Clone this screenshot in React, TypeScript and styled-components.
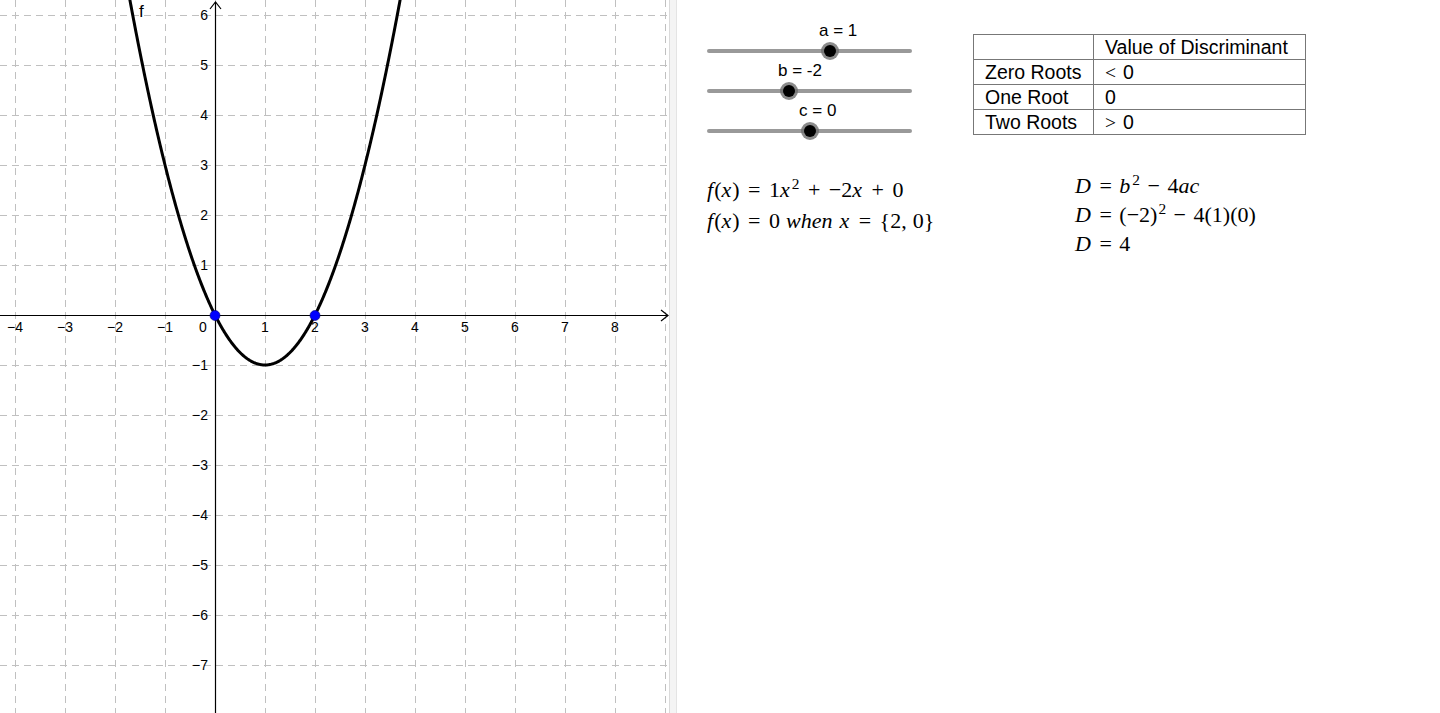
import React from "react";
import styled, { createGlobalStyle } from "styled-components";

const Global = createGlobalStyle`
  html, body { margin: 0; padding: 0; background: #fff; overflow: hidden; }
  #root { width: 1440px; height: 713px; }
`;

const Page = styled.div`
  display: flex;
  width: 1440px;
  height: 713px;
  background: #fff;
`;

const GraphPanel = styled.div`
  width: 669px;
  height: 713px;
  flex: none;
  overflow: hidden;
`;

const Divider = styled.div`
  width: 6px;
  flex: none;
  background: #f4f4f4;
  border-left: 1px solid #dadada;
  border-right: 1px solid #e4e4e4;
`;

const RightPanel = styled.div`
  flex: 1;
  display: flex;
  flex-direction: column;
  padding: 21px 0 0 30px;
`;

const TopRow = styled.div`
  display: flex;
  align-items: flex-start;
`;

const Sliders = styled.div`
  width: 205px;
  display: flex;
  flex-direction: column;
`;

const SliderItem = styled.div`
  height: 40px;
  display: flex;
  flex-direction: column;
`;

const SliderLabel = styled.div<{ $offset: number }>`
  height: 20px;
  line-height: 20px;
  margin-left: ${(p) => p.$offset}px;
  font-family: "Liberation Sans", Arial, sans-serif;
  font-size: 17px;
  color: #000;
  white-space: nowrap;
`;

const TrackZone = styled.div`
  position: relative;
  height: 20px;
  display: flex;
  align-items: center;
`;

const Track = styled.div`
  width: 100%;
  height: 4px;
  border-radius: 2px;
  background: #999999;
`;

const Knob = styled.div`
  position: absolute;
  top: 1px;
  width: 18px;
  height: 18px;
  margin-left: -9px;
  border-radius: 50%;
  background: rgba(110, 110, 110, 0.8);
  display: flex;
  align-items: center;
  justify-content: center;
  &::after {
    content: "";
    width: 12px;
    height: 12px;
    border-radius: 50%;
    background: #000;
  }
`;

const Table = styled.table`
  margin-left: 61px;
  margin-top: 13px;
  border-collapse: collapse;
  font-family: "Liberation Sans", Arial, sans-serif;
  font-size: 19.5px;
  color: #000;
`;

const Cell = styled.td<{ $w?: number }>`
  border: 1px solid #777;
  height: 24px;
  padding: 0 0 0 11px;
  line-height: 22px;
  white-space: nowrap;
  ${(p) => (p.$w ? `width: ${p.$w}px;` : "")}
`;

const Rel = styled.span`
  font-family: "Liberation Serif", "DejaVu Serif", serif;
  margin-right: 7px;
`;

const BottomRow = styled.div`
  display: grid;
  grid-template-columns: 368px auto;
  margin-top: 30px;
`;

const MathBlock = styled.div<{ $pad: number; $lh: number; $gap: number }>`
  padding-top: ${(p) => p.$pad}px;
  font-family: "Liberation Serif", "DejaVu Serif", serif;
  font-size: 22px;
  color: #000;
  line-height: ${(p) => p.$lh}px;
  --op-gap: ${(p) => p.$gap}px;
`;

const MathLine = styled.div`
  white-space: nowrap;
`;

const V = styled.i`
  font-style: italic;
  margin-right: 1px;
`;

const Op = styled.span`
  margin: 0 var(--op-gap);
`;

const Sup = styled.sup`
  font-size: 0.7em;
  vertical-align: 0;
  position: relative;
  top: -0.5em;
  line-height: 0;
  margin-left: 1px;
`;

const Sp = styled.span`
  display: inline-block;
  width: 6px;
`;

/* ---------- Graph ---------- */

const OX = 215;
const OY = 315;
const U = 50;

function Graph() {
  const grid: number[] = [];
  for (let p = 15; p <= 665; p += 50) grid.push(p);

  const pts: string[] = [];
  for (let x = -1.9; x <= 3.9; x += 0.01) {
    const y = x * x - 2 * x;
    pts.push(`${(OX + U * x).toFixed(2)},${(OY - U * y).toFixed(2)}`);
  }

  const xl: number[] = [];
  for (let k = -4; k <= 8; k++) if (k !== 0) xl.push(k);
  const yl: number[] = [];
  for (let k = 6; k >= -7; k--) if (k !== 0) yl.push(k);
  const fmt = (k: number) => (k < 0 ? `\u2212${-k}` : `${k}`);

  return (
    <svg width="669" height="713" viewBox="0 0 669 713">
      <g stroke="#c0c0c0" strokeWidth="1" strokeDasharray="7,5">
        {grid.map((p) => (
          <line key={"v" + p} x1={p + 0.5} y1={0} x2={p + 0.5} y2={713} />
        ))}
        {grid.map((p) => (
          <line key={"h" + p} x1={0} y1={p + 0.5} x2={669} y2={p + 0.5} />
        ))}
      </g>
      <g stroke="#000" strokeWidth="1.2" fill="none">
        <line x1={0} y1={OY + 0.5} x2={668} y2={OY + 0.5} />
        <polyline points={`661,${OY - 5} 668,${OY + 0.5} 661,${OY + 6}`} />
        <line x1={OX + 0.5} y1={2} x2={OX + 0.5} y2={713} />
        <polyline points={`${OX - 5},9 ${OX + 0.5},2 ${OX + 6},9`} />
      </g>
      <g fontFamily="'Liberation Sans', Arial, sans-serif" fontSize="14" fill="#000">
        {xl.map((k) => (
          <text key={"x" + k} x={OX + U * k} y={332} textAnchor="middle">
            {fmt(k)}
          </text>
        ))}
        <text x={203} y={332} textAnchor="middle">0</text>
        {yl.map((k) => (
          <text key={"y" + k} x={208} y={OY - U * k + 5} textAnchor="end">
            {fmt(k)}
          </text>
        ))}
      </g>
      <polyline points={pts.join(" ")} fill="none" stroke="#000" strokeWidth="3" strokeLinejoin="round" />
      <text x={139} y={17} fontFamily="'Liberation Sans', Arial, sans-serif" fontSize="17" fill="#000">
        f
      </text>
      <circle cx={OX} cy={OY + 0.5} r={5} fill="#0000ff" stroke="#00007a" strokeWidth="0.6" />
      <circle cx={OX + 2 * U} cy={OY + 0.5} r={5} fill="#0000ff" stroke="#00007a" strokeWidth="0.6" />
    </svg>
  );
}

/* ---------- Sliders ---------- */

const TRACK_W = 205;
type SliderDef = { name: string; value: number; min: number; max: number };
const sliders: SliderDef[] = [
  { name: "a", value: 1, min: -5, max: 5 },
  { name: "b", value: -2, min: -10, max: 10 },
  { name: "c", value: 0, min: -5, max: 5 },
];

function Slider({ s }: { s: SliderDef }) {
  const frac = (s.value - s.min) / (s.max - s.min);
  const pos = frac * TRACK_W;
  return (
    <SliderItem>
      <SliderLabel $offset={Math.round(pos - 11)}>
        {s.name} = {s.value}
      </SliderLabel>
      <TrackZone>
        <Track />
        <Knob style={{ left: pos }} />
      </TrackZone>
    </SliderItem>
  );
}

export default function App() {
  return (
    <>
      <Global />
      <Page>
        <GraphPanel>
          <Graph />
        </GraphPanel>
        <Divider />
        <RightPanel>
          <TopRow>
            <Sliders>
              {sliders.map((s) => (
                <Slider key={s.name} s={s} />
              ))}
            </Sliders>
            <Table>
              <tbody>
                <tr>
                  <Cell $w={108}></Cell>
                  <Cell $w={200}>Value of Discriminant</Cell>
                </tr>
                <tr>
                  <Cell>Zero Roots</Cell>
                  <Cell>
                    <Rel>&lt;</Rel>0
                  </Cell>
                </tr>
                <tr>
                  <Cell>One Root</Cell>
                  <Cell>0</Cell>
                </tr>
                <tr>
                  <Cell>Two Roots</Cell>
                  <Cell>
                    <Rel>&gt;</Rel>0
                  </Cell>
                </tr>
              </tbody>
            </Table>
          </TopRow>
          <BottomRow>
            <MathBlock $pad={3} $lh={31} $gap={8.5}>
              <MathLine>
                <V>f</V>(<V>x</V>)<Op>=</Op>1<V>x</V>
                <Sup>2</Sup>
                <Op>+</Op>−2<V>x</V>
                <Op>+</Op>0
              </MathLine>
              <MathLine>
                <V>f</V>(<V>x</V>)<Op>=</Op>0<Sp />
                <V>when</V>
                <Sp />
                <V>x</V>
                <Op>=</Op>
                {"{"}2,<Sp />0{"}"}
              </MathLine>
            </MathBlock>
            <MathBlock $pad={0} $lh={29} $gap={7.5}>
              <MathLine>
                <V>D</V>
                <Op>=</Op>
                <V>b</V>
                <Sup>2</Sup>
                <Op>−</Op>4<V>ac</V>
              </MathLine>
              <MathLine>
                <V>D</V>
                <Op>=</Op>(−2)
                <Sup>2</Sup>
                <Op>−</Op>4(1)(0)
              </MathLine>
              <MathLine>
                <V>D</V>
                <Op>=</Op>4
              </MathLine>
            </MathBlock>
          </BottomRow>
        </RightPanel>
      </Page>
    </>
  );
}
